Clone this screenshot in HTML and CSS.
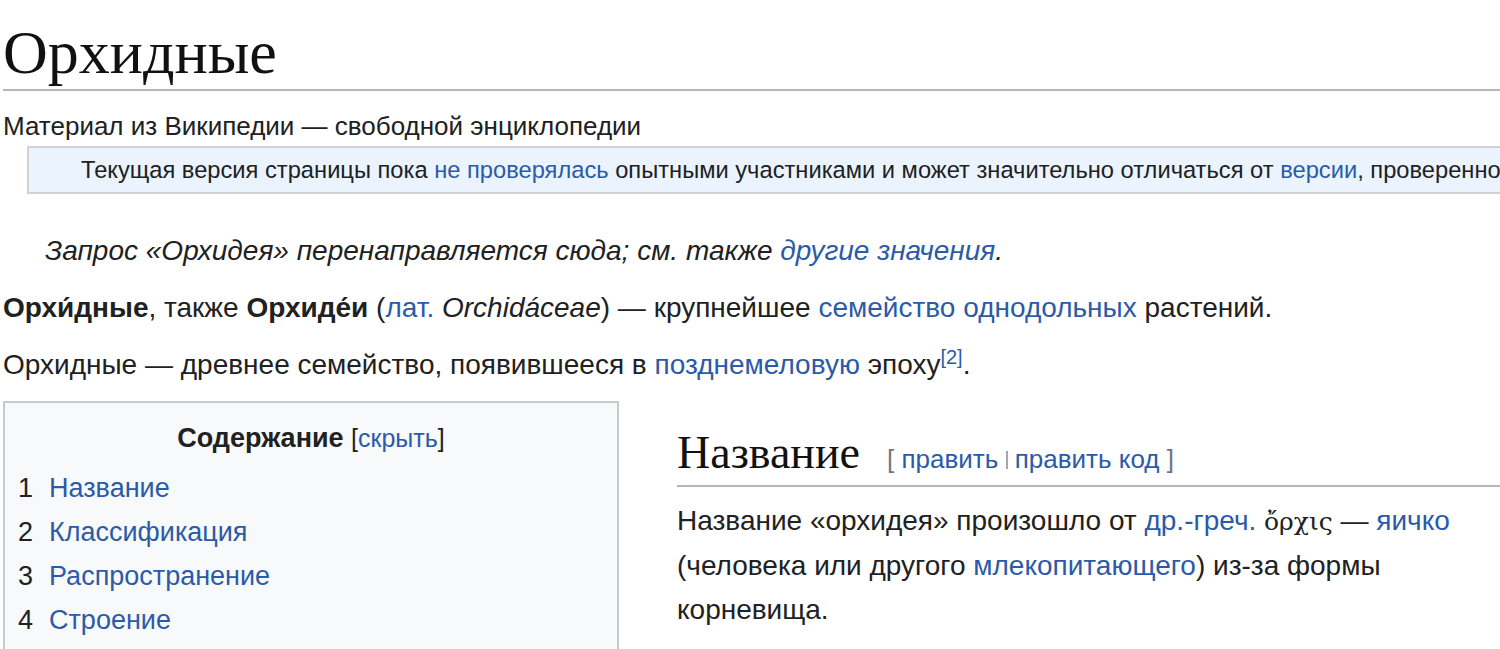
FILE: index.html
```html
<!DOCTYPE html>
<html lang="ru">
<head>
<meta charset="utf-8">
<title>Орхидные — Википедия</title>
<link rel="stylesheet" href="styles.css">
</head>
<body>
<div class="content">
  <h1 class="first-heading">Орхидные</h1>
  <div class="site-sub">Материал из Википедии — свободной энциклопедии</div>
  <div class="notice">Текущая версия страницы пока <a href="#">не проверялась</a> опытными участниками и может значительно отличаться от <a href="#">версии</a>, проверенной 12 марта 2021; проверки требуют 4 правки.</div>
  <div class="hatnote">Запрос «Орхидея» перенаправляется сюда; см. также <a href="#">другие значения</a>.</div>
  <p class="para"><b>Орхи́дные</b>, также <b>Орхиде́и</b> (<a href="#">лат.</a> <i>Orchidáceae</i>) — крупнейшее <a href="#">семейство</a> <a href="#">однодольных</a> растений.</p>
  <p class="para">Орхидные — древнее семейство, появившееся в <a href="#">позднемеловую</a> эпоху<sup class="ref"><a href="#">[2]</a></sup>.</p>
  <div class="row">
    <div class="toc">
      <div class="toc-title"><b>Содержание</b> <span class="toc-toggle">[<a href="#">скрыть</a>]</span></div>
      <ul class="toc-list">
        <li><span class="toc-num">1</span><a href="#">Название</a></li>
        <li><span class="toc-num">2</span><a href="#">Классификация</a></li>
        <li><span class="toc-num">3</span><a href="#">Распространение</a></li>
        <li><span class="toc-num">4</span><a href="#">Строение</a></li>
      </ul>
    </div>
    <div class="section">
      <h2 class="section-heading"><span class="headline">Название</span><span class="editsection"><span class="br">[</span> <a href="#">править</a> <span class="sep"></span> <a href="#">править код</a> <span class="br">]</span></span></h2>
      <p class="para section-text">Название «орхидея» произошло от <a href="#">др.-греч.</a> <span class="greek">ὄρχις</span> — <a href="#">яичко</a> (человека или другого <a href="#">млекопитающего</a>) из-за формы корневища.</p>
    </div>
  </div>
</div>
</body>
</html>
```

FILE: styles.css
```css
html, body {
  margin: 0;
  padding: 0;
  background: #ffffff;
  overflow: hidden;
}

body {
  width: 1500px;
  height: 649px;
  font-family: "Liberation Sans", Arial, sans-serif;
  color: #202122;
}

.content {
  padding-left: 3px;
}

a {
  color: #2b5ba8;
  text-decoration: none;
}

.first-heading {
  margin: 0;
  padding-top: 16px;
  font-family: "Liberation Serif", "Times New Roman", serif;
  font-weight: normal;
  font-size: 62px;
  line-height: 73px;
  color: #111;
  border-bottom: 2px solid #b4b8bd;
}

.site-sub {
  margin-top: 20px;
  font-size: 26px;
  line-height: 30px;
}

.notice {
  margin: 5px 0 0 24px;
  width: 1700px;
  padding-left: 52px;
  background: #eaf3fe;
  border: 2px solid #cfd3d8;
  font-size: 23.7px;
  line-height: 44px;
  white-space: nowrap;
}

.hatnote {
  margin-top: 36px;
  padding-left: 42px;
  font-style: italic;
  font-size: 28px;
  line-height: 42px;
}

.para {
  margin: 15px 0 0;
  font-size: 28px;
  line-height: 42px;
}

.ref {
  font-size: 20px;
  line-height: 1;
}

.row {
  display: flex;
  align-items: flex-start;
  margin-top: 15px;
}

.toc {
  flex: 0 0 auto;
  width: 612px;
  height: 300px;
  background: #f8f9fa;
  border: 2px solid #c6cacf;
  box-sizing: content-box;
}

.toc-title {
  margin-top: 14px;
  text-align: center;
  font-size: 27px;
  line-height: 42px;
}

.toc-toggle {
  font-size: 25px;
}

.toc-list {
  list-style: none;
  margin: 7px 0 0;
  padding: 0 0 0 13px;
  font-size: 27px;
  line-height: 44px;
}

.toc-num {
  display: inline-block;
  width: 31px;
  color: #202122;
}

.section {
  flex: 1 1 auto;
  margin-left: 58px;
  padding-top: 26px;
}

.section-heading {
  margin: 0;
  display: flex;
  align-items: baseline;
  border-bottom: 2px solid #b4b8bd;
  font-weight: normal;
  line-height: 51px;
}

.headline {
  font-family: "Liberation Serif", "Times New Roman", serif;
  font-size: 46px;
  color: #111;
}

.editsection {
  margin-left: 27px;
  font-family: "Liberation Sans", Arial, sans-serif;
  font-size: 26px;
}

.editsection .br {
  color: #72777d;
}

.editsection .sep {
  display: inline-block;
  width: 2px;
  height: 18px;
  background: #a2a9b1;
  vertical-align: -1px;
}

.section-text {
  margin-top: 12px;
  line-height: 44px;
}

.greek {
  font-family: "DejaVu Serif", serif;
  font-size: 25px;
}
```
